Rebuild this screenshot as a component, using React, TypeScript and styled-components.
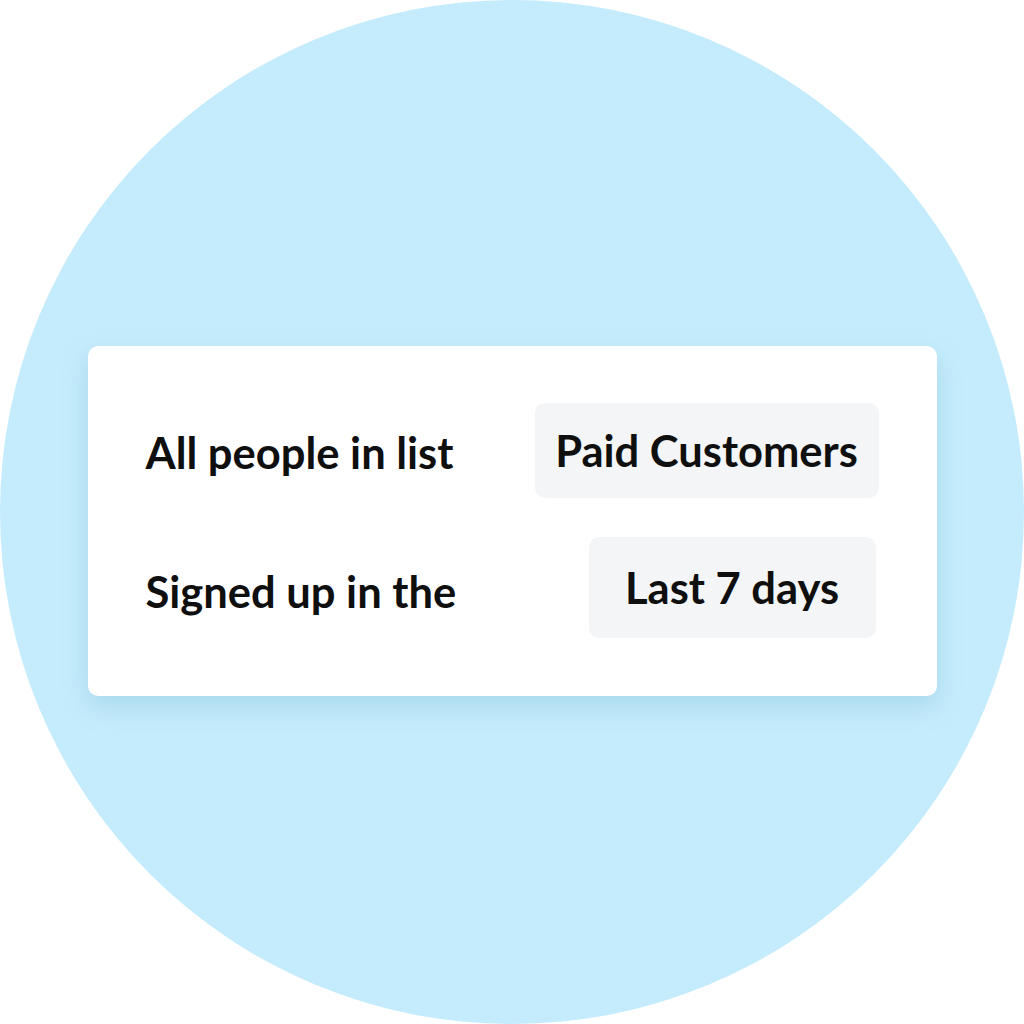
import React from 'react';
import styled, { createGlobalStyle } from 'styled-components';

const GlobalStyle = createGlobalStyle`
  html, body {
    margin: 0;
    padding: 0;
    background: #ffffff;
  }
  body {
    font-family: Lato, "Noto Sans", sans-serif;
  }
`;

const Stage = styled.div`
  width: 1024px;
  height: 1024px;
  display: flex;
  align-items: center;
  justify-content: center;
  overflow: hidden;
`;

const Circle = styled.div`
  width: 1024px;
  height: 1024px;
  border-radius: 50%;
  background: #c4ecfc;
  display: flex;
  align-items: center;
  justify-content: center;
`;

const Card = styled.div`
  box-sizing: border-box;
  width: 849px;
  height: 350px;
  margin-top: 17px;
  padding: 57px 58px 57px 58px;
  background: #ffffff;
  border-radius: 10px;
  box-shadow: 0 10px 24px rgba(120, 180, 210, 0.35);
  display: flex;
  flex-direction: column;
  gap: 39px;
`;

const Row = styled.div`
  display: flex;
  align-items: center;
  justify-content: space-between;
`;

const Label = styled.span<{ $shift?: number }>`
  font-family: Lato, "Noto Sans", sans-serif;
  font-weight: 700;
  font-size: 43.5px;
  color: #0f0f0f;
  padding-top: ${(p) => p.$shift ?? 0}px;
`;

const Pill = styled.div<{ $width: number; $height: number; $offset?: number }>`
  box-sizing: border-box;
  width: ${(p) => p.$width}px;
  height: ${(p) => p.$height}px;
  margin-right: ${(p) => p.$offset ?? 0}px;
  background: #f3f5f7;
  border-radius: 10px;
  display: flex;
  align-items: center;
  justify-content: center;
  font-family: Lato, "Noto Sans", sans-serif;
  font-weight: 700;
  font-size: 43.5px;
  color: #0f0f0f;
`;

export default function App() {
  return (
    <>
      <GlobalStyle />
      <Stage>
        <Circle>
          <Card>
            <Row>
              <Label $shift={4}>All people in list</Label>
              <Pill $width={344} $height={95}>Paid Customers</Pill>
            </Row>
            <Row>
              <Label $shift={8}>Signed up in the</Label>
              <Pill $width={287} $height={101} $offset={3}>Last 7 days</Pill>
            </Row>
          </Card>
        </Circle>
      </Stage>
    </>
  );
}
